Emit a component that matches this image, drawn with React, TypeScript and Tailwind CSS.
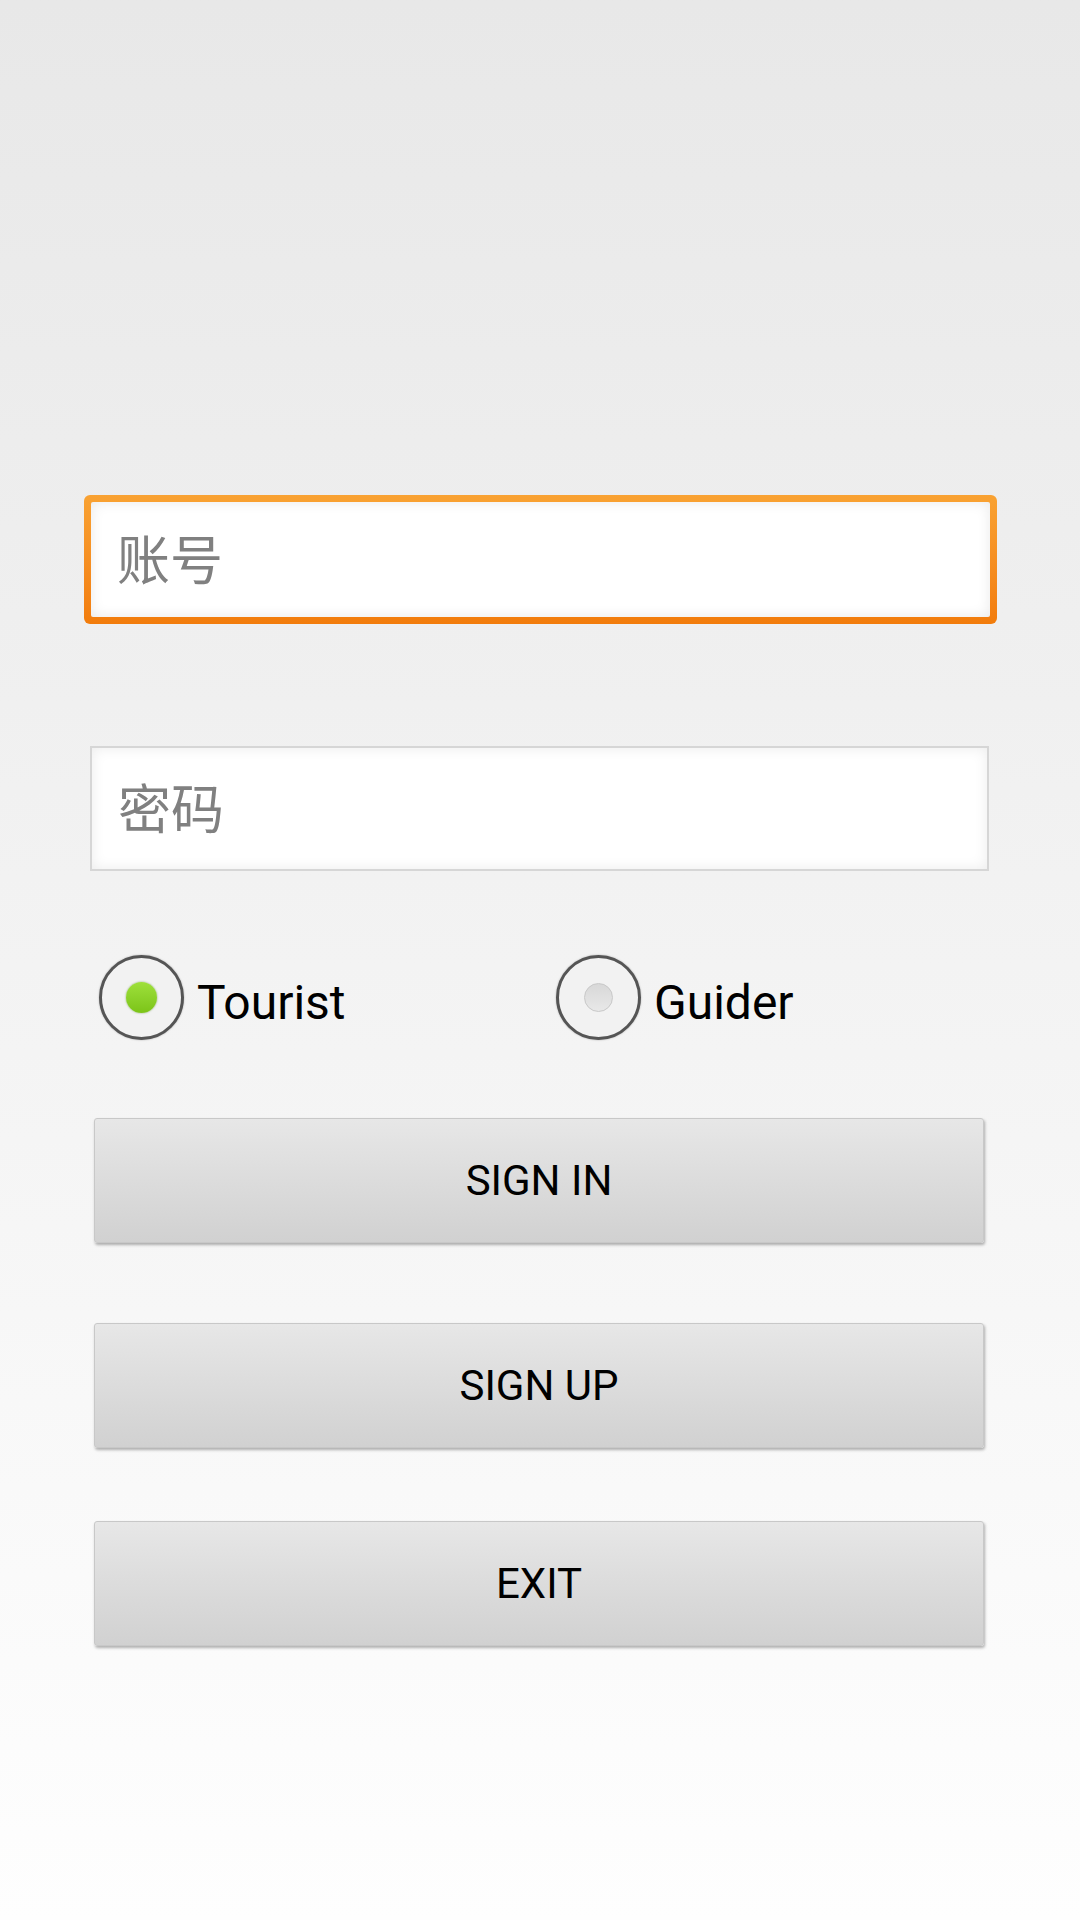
import React from "react";

const font = { fontFamily: 'Roboto, "Noto Sans CJK SC", sans-serif' };

function Radio({ checked, label }: { checked: boolean; label: string }) {
  return (
    <div className="flex items-center">
      <div className="w-[85px] h-[85px] rounded-full border-[3px] border-[#555555] bg-[#f2f2f2] flex items-center justify-center shadow-[0_0_2px_rgba(0,0,0,0.3)]">
        {checked ? (
          <div className="w-[31px] h-[31px] rounded-full bg-gradient-to-b from-[#9ee03a] to-[#7cc417] shadow-[0_0_2px_rgba(60,120,0,0.6)]" />
        ) : (
          <div className="w-[29px] h-[29px] rounded-full bg-gradient-to-b from-[#d8d8d8] to-[#e8e8e8] border border-[#c8c8c8]" />
        )}
      </div>
      <span className="ml-[13px] pt-[10px] text-[48px] text-black leading-none">{label}</span>
    </div>
  );
}

function Btn({ label, className }: { label: string; className: string }) {
  return (
    <div
      className={`ml-[94px] w-[890px] h-[125px] rounded-[3px] bg-gradient-to-b from-[#e7e7e7] to-[#d1d1d1] border border-[#c8c8c8] shadow-[1px_2px_3px_rgba(0,0,0,0.3)] flex items-center justify-center text-[42px] text-black ${className}`}
    >
      {label}
    </div>
  );
}

export default function App() {
  return (
    <div
      className="w-[1080px] h-[1920px] bg-gradient-to-b from-[#e8e8e8] to-[#fefefe] flex flex-col pt-[495px]"
      style={font}
    >
      <div className="ml-[84px] w-[913px] h-[129px] rounded-[6px] p-[7px] bg-gradient-to-b from-[#f9a232] to-[#f27c0b]">
        <div className="w-full h-full bg-white rounded-[2px] shadow-[inset_0_0_14px_rgba(0,0,0,0.09)] flex items-center pl-[26px] pt-[6px] text-[53px] text-[#808080]">
          账号
        </div>
      </div>
      <div className="mt-[122px] ml-[90px] w-[899px] h-[125px] border-2 border-[#d6d6d6] bg-white shadow-[inset_0_0_14px_rgba(0,0,0,0.08)] flex items-center pl-[26px] pt-[6px] text-[53px] text-[#808080]">
        密码
      </div>
      <div className="mt-[84px] ml-[99px] flex">
        <div className="w-[457px]">
          <Radio checked label="Tourist" />
        </div>
        <Radio checked={false} label="Guider" />
      </div>
      <Btn label="SIGN IN" className="mt-[78px]" />
      <Btn label="SIGN UP" className="mt-[80px]" />
      <Btn label="EXIT" className="mt-[73px]" />
    </div>
  );
}
